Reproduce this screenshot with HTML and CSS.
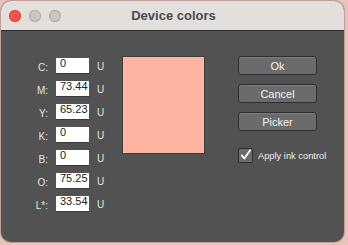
FILE: index.html
```html
<!DOCTYPE html>
<html lang="en">
<head>
    <meta charset="UTF-8">
    <title>Device colors</title>
    <link rel="stylesheet" href="styles.css">
</head>
<body>

    <div class="window">
        <div class="title-bar">
            <div class="lights">
                <span class="light red"></span>
                <span class="light"></span>
                <span class="light"></span>
            </div>
            <div class="title">Device colors</div>
        </div>

        <div class="content">
            <!-- Valores de tinta -->
            <div class="values">
                <label>C:</label><div class="field">0</div><span class="unit">U</span>
                <label>M:</label><div class="field">73.44</div><span class="unit">U</span>
                <label>Y:</label><div class="field">65.23</div><span class="unit">U</span>
                <label>K:</label><div class="field">0</div><span class="unit">U</span>
                <label>B:</label><div class="field">0</div><span class="unit">U</span>
                <label>O:</label><div class="field">75.25</div><span class="unit">U</span>
                <label>L*:</label><div class="field">33.54</div><span class="unit">U</span>
            </div>

            <div class="swatch"></div>

            <div class="actions">
                <button class="btn">Ok</button>
                <button class="btn">Cancel</button>
                <button class="btn">Picker</button>
                <div class="check-row">
                    <span class="checkbox">
                        <svg width="14" height="14" viewBox="0 0 14 14">
                            <path d="M3 7.4 L5.8 10.8 L12 1.8" fill="none" stroke="#fff" stroke-width="2" stroke-linecap="round" stroke-linejoin="round"/>
                        </svg>
                    </span>
                    <span>Apply ink control</span>
                </div>
            </div>
        </div>
    </div>

</body>
</html>
```

FILE: styles.css
```css
html, body {
    height: 100%;
    margin: 0;
    padding: 0;
    overflow: hidden;
}

body {
    font-family: "Liberation Sans", Arial, sans-serif;
    background-color: #e8c3ba;
    padding: 1px 0 0 1px;
    box-sizing: border-box;
}

.window {
    width: 343px;
    height: 241px;
    border-radius: 10px;
    overflow: hidden;
    background-color: #525252;
    box-shadow: 0 0 0 1px rgba(120, 90, 85, 0.35);
    display: flex;
    flex-direction: column;
}

.title-bar {
    height: 29px;
    background-color: #e2dfdc;
    border-bottom: 1px solid #2c2c2c;
    display: flex;
    align-items: center;
    position: relative;
}

.lights {
    display: flex;
    gap: 8px;
    padding-left: 8px;
    padding-top: 1px;
}

.light {
    width: 12px;
    height: 12px;
    border-radius: 50%;
    background-color: #c9c6c4;
    box-shadow: inset 0 0 0 1px #adaaa8;
}

.light.red {
    background-color: #f6544b;
    box-shadow: inset 0 0 0 1px #d9423a;
}

.title {
    position: absolute;
    left: 0;
    right: 0;
    text-align: center;
    font-size: 13px;
    font-weight: bold;
    color: #4b4b4b;
    padding-left: 2px;
}

.content {
    display: flex;
    align-items: flex-start;
    padding: 25px 0 0 19px;
}

.values {
    display: grid;
    grid-template-columns: 28px 33px 8px;
    column-gap: 8px;
    row-gap: 8px;
    align-items: center;
    margin-top: 2px;
}

.values label {
    text-align: right;
    font-size: 10px;
    color: #e4e4e4;
    padding-top: 3px;
}

.field {
    height: 15px;
    background-color: #fff;
    font-size: 11px;
    line-height: 11px;
    color: #222;
    padding-left: 4px;
    box-sizing: border-box;
    box-shadow: 0 1px 0 #3a3a3a;
}

.unit {
    font-size: 10px;
    color: #e4e4e4;
    padding-top: 2px;
}

.swatch {
    width: 83px;
    height: 98px;
    margin-left: 17px;
    background-color: #fdb4a1;
    border: 1px solid #3e3e3e;
    box-sizing: border-box;
}

.actions {
    display: flex;
    flex-direction: column;
    gap: 9px;
    margin-left: 33px;
}

.btn {
    width: 79px;
    height: 19px;
    padding: 0;
    font-family: inherit;
    font-size: 11px;
    color: #f2f2f2;
    background-color: #6b6b6b;
    border: 1px solid #2f2f2f;
    border-radius: 3px;
    box-shadow: inset 0 1px 0 #7c7c7c;
}

.check-row {
    display: flex;
    align-items: center;
    gap: 5px;
    margin-top: 8px;
    font-size: 9.3px;
    color: #ededed;
}

.checkbox {
    width: 15px;
    height: 15px;
    background-color: #6c6c6c;
    border: 1px solid #2f2f2f;
    border-radius: 2px;
    box-sizing: border-box;
    display: flex;
    align-items: center;
    justify-content: center;
}

.checkbox svg {
    margin-top: -2px;
}
```
